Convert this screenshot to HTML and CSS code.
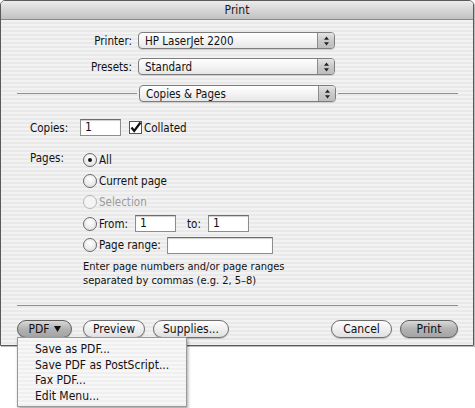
FILE: index.html
```html
<!DOCTYPE html>
<html>
<head>
<meta charset="utf-8">
<title>Print</title>
<link rel="stylesheet" href="styles.css">
</head>
<body>
<div class="window">
  <div class="titlebar">Print</div>
  <div class="content">
    <div class="form">
      <span class="lbl">Printer:</span>
      <div class="popup"><span class="ptext">HP LaserJet 2200</span><span class="arrows"><svg width="7" height="10" viewBox="0 0 7 10"><path d="M3.5 0.5 L6 3.8 L1 3.8 Z M3.5 9.5 L6 6.2 L1 6.2 Z" fill="#222"/></svg></span></div>
      <span class="lbl">Presets:</span>
      <div class="popup"><span class="ptext">Standard</span><span class="arrows"><svg width="7" height="10" viewBox="0 0 7 10"><path d="M3.5 0.5 L6 3.8 L1 3.8 Z M3.5 9.5 L6 6.2 L1 6.2 Z" fill="#222"/></svg></span></div>
    </div>
    <div class="panesel">
      <div class="hline"></div>
      <div class="popup"><span class="ptext">Copies &amp; Pages</span><span class="arrows"><svg width="7" height="10" viewBox="0 0 7 10"><path d="M3.5 0.5 L6 3.8 L1 3.8 Z M3.5 9.5 L6 6.2 L1 6.2 Z" fill="#222"/></svg></span></div>
      <div class="hline"></div>
    </div>
    <div class="pane">
      <div class="copies">
        <span class="plbl">Copies:</span>
        <div class="field f-copies">1</div>
        <span class="check"><svg width="13" height="13" viewBox="0 0 13 13"><rect x="0.5" y="0.5" width="12" height="12" fill="#fff" stroke="#555"/><path d="M2.5 6.5 L5.2 10 L11.5 1.5" fill="none" stroke="#111" stroke-width="2.2"/></svg></span>
        <span class="ctext">Collated</span>
      </div>
      <div class="pages">
        <span class="plbl">Pages:</span>
        <div class="radios">
          <div class="rrow"><span class="radio on"></span><span>All</span></div>
          <div class="rrow"><span class="radio"></span><span>Current page</span></div>
          <div class="rrow dis"><span class="radio"></span><span>Selection</span></div>
          <div class="rrow"><span class="radio"></span><span>From:</span><div class="field f-from">1</div><span class="to">to:</span><div class="field f-to">1</div></div>
          <div class="rrow"><span class="radio"></span><span>Page range:</span><div class="field f-range"></div></div>
          <p class="help">Enter page numbers and/or page ranges<br>separated by commas (e.g. 2, 5–8)</p>
        </div>
      </div>
    </div>
    <div class="sep"></div>
    <div class="buttons">
      <span class="btn dark b-pdf">PDF <svg width="7" height="6" viewBox="0 0 7 6"><path d="M0 0 L7 0 L3.5 6 Z" fill="#111"/></svg></span>
      <span class="btn b-preview">Preview</span>
      <span class="btn b-supplies">Supplies...</span>
      <span class="spacer"></span>
      <span class="btn b-cancel">Cancel</span>
      <span class="btn dark b-print">Print</span>
    </div>
  </div>
</div>
<div class="menu">
  <div class="mi">Save as PDF...</div>
  <div class="mi">Save PDF as PostScript...</div>
  <div class="mi">Fax PDF...</div>
  <div class="mi">Edit Menu...</div>
</div>
</body>
</html>
```

FILE: styles.css
```css
* { box-sizing: border-box; }
html, body { margin: 0; padding: 0; background: #fff; }
body {
  font-family: "DejaVu Sans Condensed", "DejaVu Sans", "Noto Sans", sans-serif;
  font-size: 11.5px;
  color: #111;
  position: relative;
  width: 475px;
  height: 408px;
  overflow: hidden;
}
.window {
  width: 474px;
  height: 346px;
  border: 1px solid #5a5a5a;
  border-radius: 5px 5px 0 0;
  box-shadow: 1px 1px 0 #bbb;
  overflow: hidden;
  display: flex;
  flex-direction: column;
}
.titlebar {
  height: 19px;
  flex: none;
  background: linear-gradient(#ececec, #d6d6d6 50%, #c2c2c2);
  border-bottom: 1px solid #8a8a8a;
  text-align: center;
  line-height: 18px;
  font-size: 12px;
  color: #1a1a1a;
}
.content {
  flex: 1;
  background: repeating-linear-gradient(#f2f2f2 0 2px, #e9e9e9 2px 4px);
  padding-top: 12px;
  display: flex;
  flex-direction: column;
}
.form {
  display: grid;
  grid-template-columns: 131px 197px;
  column-gap: 6px;
  row-gap: 9px;
  align-items: center;
}
.lbl { text-align: right; }
.popup {
  height: 17px;
  width: 197px;
  border: 1px solid #7d7d7d;
  border-radius: 4px;
  background: linear-gradient(#ffffff, #f4f4f4 50%, #e6e6e6);
  display: flex;
  align-items: center;
  box-shadow: 0 1px 0 #cfcfcf;
  overflow: hidden;
}
.ptext { flex: 1; padding-left: 6px; font-size: 11.5px; }
.arrows {
  width: 17px;
  height: 100%;
  border-left: 1px solid #8c8c8c;
  background: linear-gradient(#e4e4e4, #c9c9c9 50%, #bdbdbd);
  display: flex;
  align-items: center;
  justify-content: center;
}
.panesel {
  display: flex;
  align-items: center;
  margin-top: 10px;
  padding: 0 15px 0 16px;
}
.hline { flex: 1; height: 1px; background: #8f8f8f; }
.panesel .popup { margin: 0 2px 0 2px; }
.pane { padding-left: 29px; margin-top: 17px; }
.copies { display: flex; align-items: center; height: 17px; }
.plbl { width: 50px; flex: none; }
.field {
  height: 17px;
  background: #fff;
  border: 1px solid #8d8d8d;
  border-top-color: #6d6d6d;
  box-shadow: inset 0 1px 1px #cfcfcf;
  padding-left: 4px;
  line-height: 15px;
  font-size: 12px;
}
.f-copies { width: 41px; }
.check { margin-left: 8px; display: flex; }
.ctext { margin-left: 2px; }
.pages { display: flex; margin-top: 13px; }
.pages .plbl { padding-top: 2px; }
.radios { margin-left: 3px; }
.rrow { display: flex; align-items: center; height: 21.4px; }
.radio {
  width: 14px;
  height: 14px;
  border-radius: 50%;
  border: 1px solid #6a6a6a;
  background: radial-gradient(circle at 50% 35%, #fff, #dcdcdc);
  margin-right: 2px;
  flex: none;
  position: relative;
}
.radio.on::after {
  content: "";
  position: absolute;
  left: 4px; top: 4px;
  width: 4px; height: 4px;
  border-radius: 50%;
  background: #111;
}
.dis { color: #9a9a9a; }
.dis .radio { border-color: #b5b5b5; background: #f4f4f4; }
.f-from { width: 41px; margin-left: 7px; }
.to { margin-left: 11px; }
.f-to { width: 41px; margin-left: 7px; }
.f-range { width: 106px; margin-left: 6px; }
.help { margin: 4px 0 0 0; line-height: 14px; font-size: 11px; }
.sep { height: 1px; background: #8f8f8f; margin: 17px 15px 0 16px; }
.buttons {
  display: flex;
  align-items: center;
  padding: 0 15px 0 16px;
  margin-top: 14px;
}
.btn {
  height: 18px;
  border: 1px solid #6f6f6f;
  border-radius: 9px;
  background: linear-gradient(#fdfdfd, #efefef 50%, #e0e0e0);
  display: inline-flex;
  align-items: center;
  justify-content: center;
  gap: 4px;
  box-shadow: 0 1px 1px #bdbdbd;
  font-size: 12px;
}
.btn.dark { background: linear-gradient(#d9d9d9, #b2b2b2 50%, #a4a4a4); border-color: #5e5e5e; }
.b-pdf { width: 55px; }
.b-preview { width: 62px; margin-left: 11px; }
.b-supplies { width: 76px; margin-left: 8px; }
.spacer { flex: 1; }
.b-cancel { width: 61px; }
.b-print { width: 58px; margin-left: 8px; }
.menu {
  position: absolute;
  left: 17px;
  top: 337px;
  width: 170px;
  height: 70px;
  background: repeating-linear-gradient(#f7f7f7 0 2px, #efefef 2px 4px);
  border: 1px solid #9a9a9a;
  box-shadow: 1px 2px 3px rgba(0,0,0,0.35);
  padding: 4px 0 0 17px;
  font-size: 12px;
}
.mi { height: 15.5px; line-height: 15px; }
```
